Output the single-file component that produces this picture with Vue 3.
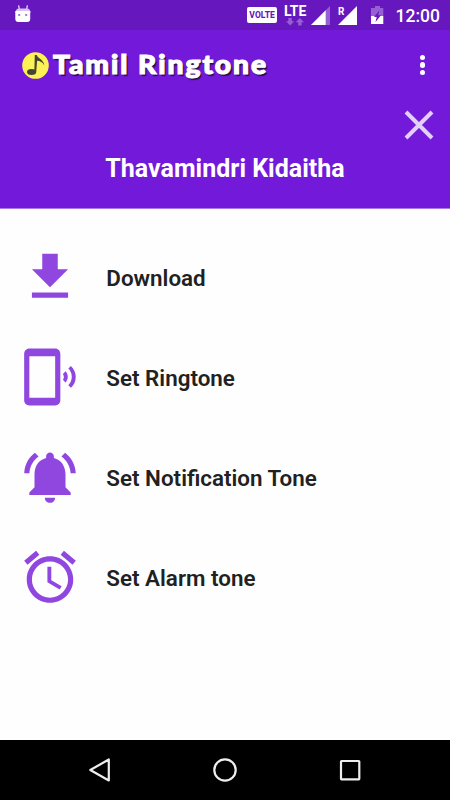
<template>
  <div class="screen">
    <div class="status-bar">
      <svg class="droid" width="16" height="18" viewBox="0 0 16 18">
        <path d="M3.600 .3L4.500 5M12.400 .3L11.500 5" stroke="#e7d9f6" stroke-width="1.300" />
        <path d="M.5 8Q.5 3.500 4 3.500H12Q15.500 3.500 15.500 8Z" fill="#d9c3f2" />
        <path d="M.3 6H15.200V14Q15.200 17 12.200 17H3.300Q.3 17 .3 14Z" fill="#fff" />
        <rect x="3.200" y="9" width="2" height="2" fill="#a57bd8" />
        <rect x="10.200" y="9" width="2" height="2" fill="#a57bd8" />
      </svg>
      <div class="status-right">
        <span class="volte">VOLTE</span>
        <div class="lte">
          <span>LTE</span>
          <svg width="18" height="8" viewBox="0 0 18 8">
            <path d="M2.300 0h3.500v3.300h2.500L4.200 7.500 0 3.300h2.300zM12.200 7.500h3.400V4.200h2.400L13.900 0 9.700 4.200h2.500z" fill="#965fd4" />
          </svg>
        </div>
        <svg class="signal" width="19" height="19" viewBox="0 0 19 19">
          <path d="M0 19L19 0V19Z" fill="#965fd4" />
          <path d="M0 19L14.700 4.300V19Z" fill="#fff" />
        </svg>
        <div class="roaming">
          <svg width="19" height="19" viewBox="0 0 19 19">
            <path d="M0 19L19 0V19Z" fill="#fff" />
          </svg>
          <span>R</span>
        </div>
        <svg class="battery" width="13" height="18" viewBox="0 0 13 18">
          <path d="M4 0H9V2H12.300V10H0V2H4Z" fill="#965fd4" />
          <path d="M0 10H12.300V18H0Z" fill="#fff" />
          <path d="M8.300 4.500L3 11H5.700L4.500 16 10 9.300H7.200Z" fill="#6617bd" />
        </svg>
        <span class="clock">12:00</span>
      </div>
    </div>

    <header class="header">
      <div class="app-bar">
        <svg class="logo" width="27" height="27" viewBox="0 0 27 27">
          <circle cx="13.500" cy="13.500" r="13.300" fill="#fdf255" />
          <ellipse cx="9.600" cy="20" rx="4.600" ry="3" fill="#454433" />
          <path d="M12.800 3h2c.6 3.400 7.300 4.700 7.500 10.500-1.500-3.300-4.300-4.500-7.200-4.700L14.200 20.300h-1.900z" fill="#454433" />
        </svg>
        <span class="brand">Tamil Ringtone</span>
        <button class="more">
          <i></i><i></i><i></i>
        </button>
      </div>
      <button class="close" @click="selected = null">
        <svg width="30" height="30" viewBox="0 0 30 30">
          <path d="M2 2L28 28M28 2L2 28" stroke="#e3d0f8" stroke-width="4" />
        </svg>
      </button>
      <h1>Thavamindri Kidaitha</h1>
    </header>

    <ul class="menu">
      <li v-for="item in items" :key="item.name" @click="selected = item.name">
        <svg viewBox="0 0 24 24">
          <path :d="item.icon" />
        </svg>
        <span>{{ item.label }}</span>
      </li>
    </ul>

    <nav class="nav-bar">
      <svg width="24" height="26" viewBox="0 0 24 26">
        <path d="M20.800 2.500V23.500L2.300 13Z" />
      </svg>
      <svg width="26" height="26" viewBox="0 0 26 26">
        <circle cx="13" cy="13" r="10.700" />
      </svg>
      <svg width="24" height="26" viewBox="0 0 24 26">
        <rect x="3" y="4" width="18.300" height="18.300" rx=".5" />
      </svg>
    </nav>
  </div>
</template>

<script setup>
import { ref } from 'vue';

const selected = ref(null);

const items = [
  {
    name: 'download',
    label: 'Download',
    icon: 'M19 9h-4V3H9v6H5l7 7 7-7zM5 18v2h14v-2z'
  },
  {
    name: 'ringtone',
    label: 'Set Ringtone',
    icon: 'M20.1 7.7l-1 1c1.8 1.8 1.8 4.6 0 6.500l1 1c2.500-2.300 2.500-6.100 0-8.500zM18 9.800l-1 1c.5.7.5 1.600 0 2.300l1 1c1.200-1.200 1.200-3 0-4.300zM14 1H4c-1.100 0-2 .9-2 2v18c0 1.100.9 2 2 2h10c1.100 0 2-.9 2-2V3c0-1.100-.9-2-2-2zm0 19H4V4h10v16z'
  },
  {
    name: 'notification',
    label: 'Set Notification Tone',
    icon: 'M7.580 4.080L6.150 2.650C3.750 4.480 2.170 7.300 2.030 10.500h2c.15-2.650 1.510-4.970 3.550-6.420zm12.390 6.420h2c-.15-3.200-1.730-6.020-4.120-7.850l-1.420 1.430c2.020 1.450 3.390 3.770 3.540 6.420zM18 11c0-3.070-1.640-5.640-4.500-6.320V4c0-.83-.67-1.500-1.500-1.500s-1.500.67-1.500 1.500v.68C7.630 5.360 6 7.920 6 11v5l-2 2v1h16v-1l-2-2v-5zm-6 11c.14 0 .27-.01.4-.04.65-.14 1.180-.58 1.440-1.180.1-.24.15-.5.15-.78h-4c.01 1.100.9 2 2.010 2z'
  },
  {
    name: 'alarm',
    label: 'Set Alarm tone',
    icon: 'M22 5.720l-4.600-3.860-1.290 1.530 4.600 3.860L22 5.720zM7.880 3.390L6.600 1.860 2 5.710l1.290 1.530 4.590-3.850zM12.500 8H11v6l4.750 2.850.75-1.230-4-2.370V8zM12 4c-4.970 0-9 4.030-9 9s4.020 9 9 9c4.970 0 9-4.030 9-9s-4.030-9-9-9zm0 16c-3.870 0-7-3.130-7-7s3.130-7 7-7 7 3.130 7 7-3.130 7-7 7z'
  }
];
</script>

<style>
body { margin: 0; background: #fff; }
</style>

<style scoped>
.screen { width: 450px; height: 800px; display: flex; flex-direction: column; overflow: hidden; background: #fefefe; font-family: Roboto, sans-serif; }
svg { display: block; flex: none; }
button { border: none; background: none; padding: 0; cursor: pointer; }

.status-bar { height: 30px; box-sizing: border-box; padding: 5px 10px 0 15px; display: flex; align-items: flex-start; justify-content: space-between; background: #6617bd; color: #fff; }
.status-right { display: flex; align-items: flex-start; height: 25px; }
.volte { width: 30px; height: 16px; margin: 2px 6.500px 0 0; border-radius: 2px; background: #fff; color: #6617bd; font-size: 8.500px; font-weight: 800; line-height: 17px; text-align: center; letter-spacing: 0.1px; }
.lte { width: 23px; margin-right: 4px; display: flex; flex-direction: column; align-items: center; gap: 1px; }
.lte span { font-size: 14px; font-weight: 700; line-height: 12px; letter-spacing: -0.1px; }
.signal { margin: 1px 8.500px 0 0; }
.roaming { position: relative; margin: 1px 13.500px 0 0; }
.roaming span { position: absolute; left: 0; top: 1px; font-size: 10px; font-weight: 700; line-height: 10px; }
.battery { margin: 1px 12px 0 0; }
.clock { font-size: 17.500px; font-weight: 500; line-height: 22px; }

.header { height: 179px; box-sizing: border-box; border-bottom: 1px solid #a878e4; display: flex; flex-direction: column; background: #7319d9; color: #fff; }
.app-bar { height: 70px; display: flex; align-items: center; padding: 0 20px 0 21.500px; }
.brand { margin-left: 4px; font-family: Lato, sans-serif; font-size: 26px; font-weight: 900; line-height: 34px; letter-spacing: 1.800px; white-space: nowrap; -webkit-text-stroke: 1.100px #fff; text-shadow: 1.500px 2px 1px #241044; transform: scaleX(1.085); transform-origin: left center; position: relative; top: -1px; }
.more { margin-left: auto; width: 15px; display: flex; flex-direction: column; align-items: center; gap: 2.300px; }
.more i { width: 5.200px; height: 5.200px; border-radius: 50%; background: #fff; }
.close { align-self: flex-end; margin: 10px 16px 0 0; }
.header h1 { margin: 14px 0 0; font-size: 25px; font-weight: 700; line-height: 30px; text-align: center; white-space: nowrap; }

.menu { flex: 1; margin: 0; padding: 19px 0 0; list-style: none; }
.menu li { height: 100px; display: flex; align-items: center; padding-left: 19px; cursor: pointer; }
.menu svg { width: 62px; height: 62px; margin-bottom: 2px; fill: #8f47e0; }
.menu span { margin-left: 25.300px; font-size: 22.400px; font-weight: 600; line-height: 28px; color: #212121; white-space: nowrap; }

.nav-bar { height: 60px; display: flex; align-items: center; justify-content: space-between; padding: 0 88px; background: #000; }
.nav-bar svg { fill: none; stroke: #eee; stroke-width: 2.200; stroke-linejoin: round; }
</style>
